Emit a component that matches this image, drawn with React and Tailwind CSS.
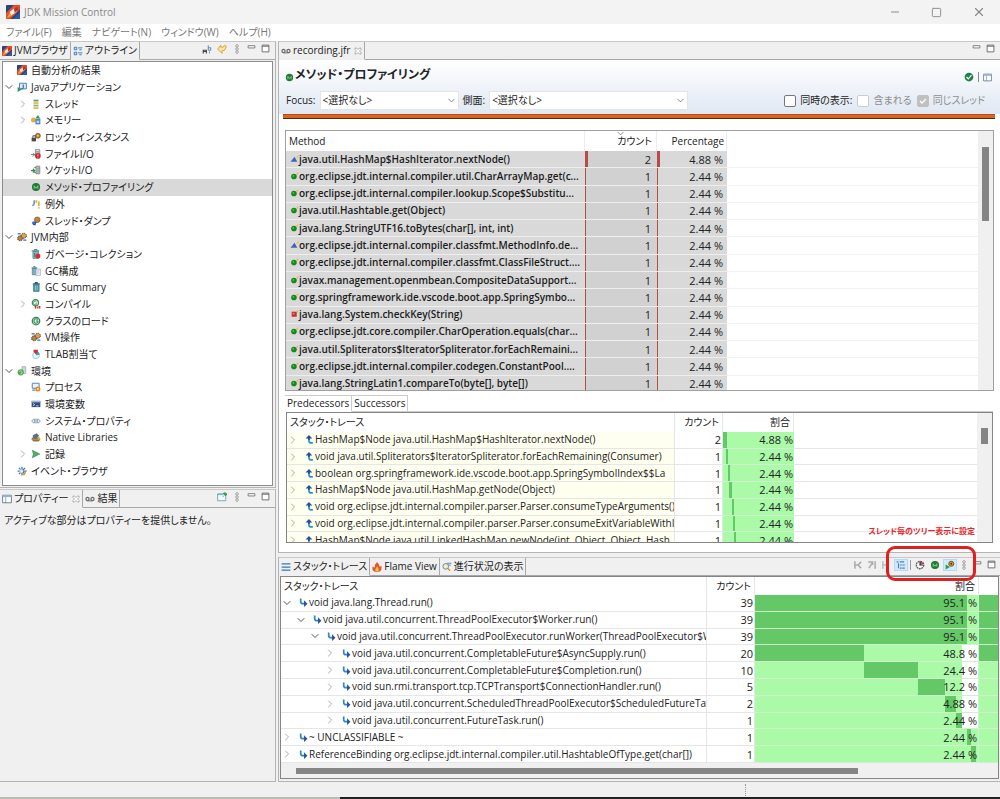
import clsx from "clsx";
import { ChevronDown, ChevronRight, Minus, Square, X } from "lucide-react";

const ICONS = {
  logo: (
    <>
      <rect width="16" height="16" rx="1" fill="#24477e" />
      <path d="M0 9 9 0h7v5L5 16H0Z" fill="#e2502c" />
      <path d="M4 8 10 3l3 1-1 4-6 4Z" fill="#f4ece6" />
      <path d="m9 4 4-2 1 3-4 4Z" fill="#c43120" />
      <path d="m1 15 3-6 3 3Z" fill="#f6a13a" />
      <path d="M8 16 16 8v8Z" fill="#2d5ba0" />
    </>
  ),
  outline: (
    <g fill="none" stroke="#3a78b8" strokeWidth="1.5">
      <path d="M2 2h4v4H2zM2 10h4v4H2z" fill="#cfe4f7" />
      <path d="M8 3h7M10 6h4M8 11h7M10 14h4" />
    </g>
  ),
  javaapp: (
    <>
      <path d="M4 2h11v9H4z" fill="#dcecfb" stroke="#4a7cb5" strokeWidth="1.5" />
      <path d="M10 4v5q0 2-3 2" fill="none" stroke="#3565a4" strokeWidth="1.8" />
      <path d="m1 8 7 4-7 4Z" fill="#2f9a62" />
    </>
  ),
  threads: (
    <>
      <path d="M4 1h8v3H4z" fill="#6d9c74" />
      <path d="M4 5h8v3H4z" fill="#e8c04b" />
      <path d="M4 9h8v3H4z" fill="#8cb29a" />
      <path d="M4 13h8v3H4z" fill="#e6bf58" />
    </>
  ),
  memory: (
    <>
      <path d="m7 5 4-5 4 6Z" fill="#3d9a52" />
      <circle cx="4" cy="8" r="4" fill="#e9ae33" />
      <path d="M7 6h8v9H7z" fill="#4b86cf" />
      <path d="M9 9h4v4H9z" fill="#b9d8f6" />
    </>
  ),
  lock: (
    <>
      <path d="M1 9h7v6H1z" fill="#4b4a46" />
      <path d="M3 9V6h4v3" fill="none" stroke="#4b4a46" strokeWidth="1.5" />
      <circle cx="11" cy="6" r="4" fill="#b77b31" stroke="#6a471b" />
      <circle cx="11" cy="6" r="1.5" fill="#f5d58d" />
    </>
  ),
  fileio: (
    <>
      <path d="M7 1h7v9H7z" fill="#eee" stroke="#777" strokeWidth="1.3" />
      <path d="M8 4h5M8 6h5" stroke="#777" />
      <path d="M0 9h5M3 7l3 2-3 3" fill="none" stroke="#3a9150" strokeWidth="1.6" />
      <circle cx="11" cy="11" r="4.5" fill="#cf2433" />
      <path d="M11 8.5v3M11 12.5v1" stroke="#fff" strokeWidth="1.3" />
    </>
  ),
  socketio: (
    <>
      <path d="M8 2h6v12H8z" fill="#ddd" stroke="#6f7a72" strokeWidth="1.4" />
      <path d="M5 4h3M5 12h3M9 5h4M9 8h4M9 11h4" stroke="#6f7a72" strokeWidth="1.4" />
      <path d="M0 9h5M3 6l3 3-3 3" fill="none" stroke="#2f8c50" strokeWidth="1.8" />
    </>
  ),
  method: (
    <>
      <circle cx="8" cy="8" r="6.5" fill="#1f7a33" />
      <path d="M5 11V6l3 4 3-4v5" fill="none" stroke="#a5e0a0" strokeWidth="1.2" />
    </>
  ),
  exception: (
    <>
      <path d="M5 2v6q0 2-3 2" fill="none" stroke="#4c7db5" strokeWidth="2" />
      <path d="M7 2h3v4H7zM11 4h3v7h-3zM11 13h3v2h-3z" fill="#e3b23b" />
    </>
  ),
  dump: (
    <>
      <circle cx="10" cy="6" r="4.5" fill="#c4852f" stroke="#77501c" />
      <path d="M2 9h7l-2 6-4-1Z" fill="#2b48b8" />
      <path d="m1 12 4-4 3 5Z" fill="#3c66dd" />
    </>
  ),
  gears: (
    <>
      <circle cx="5" cy="10" r="4" fill="#b98243" stroke="#54371a" strokeDasharray="2 1" strokeWidth="1.6" />
      <circle cx="11" cy="6" r="4" fill="#d6a45a" stroke="#5c3c18" strokeDasharray="2 1" strokeWidth="1.6" />
      <path d="M10 13h5M1 3h5" stroke="#3a6aa0" strokeWidth="2" />
    </>
  ),
  gc: (
    <>
      <path d="M3 4h9v11H3z" fill="#8bb9bd" stroke="#3c7880" />
      <path d="M1 3h12M5 1h5M6 6v7" stroke="#36747c" strokeWidth="1.6" />
      <circle cx="11" cy="11" r="4" fill="#d32c3a" />
    </>
  ),
  gcconf: (
    <>
      <path d="M2 4h7v10H2z" fill="#7fb0bd" stroke="#3e7686" />
      <path d="M1 3h9M4 1h3" stroke="#3e7686" strokeWidth="1.6" />
      <path d="M8 5h7v10H8z" fill="#f1f5fa" stroke="#8a9db4" />
      <path d="M10 8h3M10 11h3" stroke="#8a9db4" />
    </>
  ),
  trash: (
    <>
      <path d="M4 4h9v11H4z" fill="#4e9da6" stroke="#2d6a74" />
      <path d="M3 3h11M6 1h5" stroke="#2d6a74" strokeWidth="1.8" />
      <path d="M7 6v7M10 6v7" stroke="#a9d7dc" />
    </>
  ),
  compile: (
    <>
      <circle cx="7" cy="6" r="5" fill="#e6f4e8" stroke="#318550" strokeWidth="1.8" />
      <path d="M9 5a3 3 0 1 0 0 3H7" fill="none" stroke="#318550" strokeWidth="1.3" />
      <path d="M6 11h2v4H6zM9 12h2v3H9zM12 11h3v4h-3z" fill="#c0392b" />
    </>
  ),
  classload: (
    <>
      <circle cx="8" cy="8" r="6" fill="#e6f4e8" stroke="#318550" strokeWidth="2" />
      <path d="M11 6a3.5 3.5 0 1 0 0 4V8H8" fill="none" stroke="#318550" strokeWidth="1.7" />
    </>
  ),
  tlab: (
    <>
      <circle cx="8" cy="10" r="5.5" fill="#e2f2fa" stroke="#7fb5cc" />
      <path d="M8 10V4a6 6 0 0 1 6 5Z" fill="#3aa0a8" />
      <path d="M4 1h7v4l-4 3-3-4Z" fill="#cf2d32" />
    </>
  ),
  env: (
    <>
      <path d="M8 1h6v11H8z" fill="#cfd6dc" stroke="#8d99a5" />
      <circle cx="6" cy="10" r="5" fill="#4ca653" />
      <path d="M3 9q3-3 5 0t-3 4" fill="none" stroke="#c9edc4" strokeWidth="1.3" />
    </>
  ),
  process: (
    <>
      <path d="M2 2h11v8H2z" fill="#eaf2fb" stroke="#5b86b8" strokeWidth="1.6" />
      <path d="M2 13h5" stroke="#5b86b8" strokeWidth="2" />
      <circle cx="11" cy="11" r="4" fill="#e68a1e" />
      <circle cx="11" cy="11" r="1.4" fill="#fff1cf" />
    </>
  ),
  envvars: (
    <>
      <path d="M1 3h14v10H1z" fill="#2e4d7d" />
      <path d="M1 3h14v2.5H1z" fill="#9db6d6" />
      <path d="m3 7 3 2-3 2M8 11h4" fill="none" stroke="#dbe8fa" strokeWidth="1.3" />
    </>
  ),
  sysprops: (
    <path
      d="M6 5H4L1 8l3 3h2ZM10 5h2l3 3-3 3h-2ZM8 4v8"
      fill="#e4ecf6"
      stroke="#7288a8"
      strokeWidth="1.3"
    />
  ),
  jar: (
    <>
      <ellipse cx="8" cy="11" rx="7" ry="4" fill="#c6a255" />
      <path d="M1 11h13M3 14h10" stroke="#6a5a35" strokeWidth="1.4" />
      <path d="m3 5 6-3 4 4-4 4-6-1Z" fill="#5a6f88" />
      <path d="m11 7 4 3-4 3Z" fill="#e0b33e" />
    </>
  ),
  play: <path d="m2 2 12 6-12 6 2-6Z" fill="#4fb06b" stroke="#2d8a4e" />,
  event: (
    <>
      <path d="M8 1v14M1 8h14M3 3l10 10M13 3 3 13" stroke="#3f72b5" strokeWidth="2" />
      <circle cx="7" cy="8" r="3" fill="#dceafc" />
      <path d="m8 11 3 3 4-7" fill="none" stroke="#cc9c2f" strokeWidth="1.8" />
    </>
  ),
  properties: (
    <>
      <path d="M1 2h14v12H1z" fill="#fff" stroke="#5f7192" strokeWidth="1.4" />
      <path d="M1 2h14v3H1z" fill="#9db1d4" />
      <path d="M6 5v9" stroke="#5f7192" />
    </>
  ),
  tape: (
    <>
      <circle cx="4" cy="8" r="2.5" fill="none" stroke="#6b6b6b" strokeWidth="2" />
      <circle cx="12" cy="8" r="2.5" fill="none" stroke="#6b6b6b" strokeWidth="2" />
      <path d="M4 11h8" stroke="#6b6b6b" strokeWidth="1.5" />
    </>
  ),
  sort: (
    <>
      <path d="M2 15v-5h5v5M2 12h5" fill="none" stroke="#444" strokeWidth="1.8" />
      <path d="M10 2v8h4V6h-4M12 12v3" fill="none" stroke="#5582bd" strokeWidth="1.5" />
    </>
  ),
  link: (
    <path
      d="M1 8l5-6v3h4l2-3 3 2-3 6-4 1v4Z"
      fill="#fbe3a0"
      stroke="#d49d28"
      strokeWidth="1.4"
    />
  ),
  pin: (
    <>
      <path d="M1 3h13v11H1z" fill="#f1f9f8" stroke="#5e9aa3" strokeWidth="1.3" />
      <path d="M1 3h9v2H1z" fill="#7ab7c5" />
      <path d="m9 8 3-3M10 2l4 4 2-3-3-2Z" fill="#36a558" stroke="#278546" />
    </>
  ),
  dots: (
    <g fill="#fff" stroke="#8a8a8a" strokeWidth="1.3">
      <circle cx="8" cy="3" r="2" />
      <circle cx="8" cy="8" r="2" />
      <circle cx="8" cy="13" r="2" />
    </g>
  ),
  min: <path d="M2 3h12v4H2z" fill="#fff" stroke="#777" strokeWidth="1.6" />,
  max: (
    <>
      <path d="M2 2h12v12H2z" fill="#fff" stroke="#666" strokeWidth="1.6" />
      <path d="M2 4h12" stroke="#666" strokeWidth="1.6" />
    </>
  ),
  close: (
    <path
      d="M2 2h3l3 3 3-3h3v3l-3 3 3 3v3h-3l-3-3-3 3H2v-3l3-3-3-3Z"
      fill="#fff"
      stroke="#888"
      strokeWidth="1.3"
    />
  ),
  ok: (
    <>
      <circle cx="8" cy="8" r="7" fill="#1d8343" />
      <path d="m4 8 3 3 5-6" fill="none" stroke="#fff" strokeWidth="2" />
    </>
  ),
  green: (
    <>
      <circle cx="7" cy="8" r="5" fill="#14871c" />
      <circle cx="6" cy="7" r="1.6" fill="#5fbf55" />
      <path d="m10 4 5-4-1 5Z" fill="#d8c04c" />
    </>
  ),
  blue: (
    <>
      <path d="m8 3 5 9H1Z" fill="#3f63b5" />
      <path d="m11 4 4-4v5Z" fill="#d8c04c" />
    </>
  ),
  red: (
    <>
      <path d="M3 3h9v9H3z" fill="#c0322d" />
      <path d="M5 5h3v3H5z" fill="#e98a80" />
      <path d="m11 3 4-3-1 5Z" fill="#d8c04c" />
    </>
  ),
  up: (
    <>
      <path d="M7 4v6q0 4 4 4h3" fill="none" stroke="#2496d0" strokeWidth="3" />
      <path d="M7 3v6" stroke="#24509c" strokeWidth="3" />
      <path d="m1 6 6-6 6 6Z" fill="#24509c" />
    </>
  ),
  down: (
    <>
      <path d="M3 1v5q0 4 4 4h4" fill="none" stroke="#2a8ac4" strokeWidth="3" />
      <path d="m9 4 6 6-6 6Z" fill="#2a4fa0" />
    </>
  ),
  lines: <path d="M1 3h14M1 8h14M1 13h14" stroke="#3277b8" strokeWidth="2" />,
  flame: (
    <>
      <path d="M8 0q5 5 4 8l3-2q2 10-7 10T1 7l3 2Q4 4 8 0Z" fill="#dd5a26" />
      <path d="M8 7q4 4 2 8H6Q4 12 8 7Z" fill="#f9c04b" />
    </>
  ),
  progress: (
    <>
      <path d="M8 2h7M9 5h5" stroke="#5a8ab8" strokeWidth="1.6" />
      <circle cx="6" cy="7" r="4.5" fill="#f9ecc0" stroke="#4b7fae" strokeWidth="1.4" />
      <path d="m9 10 4 4" stroke="#d28e2a" strokeWidth="2" />
    </>
  ),
  treeview: (
    <g stroke="#4f81bd" strokeWidth="1.8" fill="none">
      <path d="M1 3h3M6 3h7M4 5v8M6 8h3M10 8h4M6 13h3M10 13h4" />
    </g>
  ),
  clock: (
    <>
      <circle cx="8" cy="8" r="6" fill="#f4f4f4" stroke="#555" strokeWidth="2" strokeDasharray="3 1" />
      <path d="M8 8V2a6 6 0 0 1 5 4Z" fill="#cf4034" />
      <path d="M8 3v5h5" fill="none" stroke="#26334f" strokeWidth="1.8" />
    </>
  ),
  gearplay: (
    <>
      <circle cx="10" cy="6" r="4" fill="#d29a3d" stroke="#7b5620" strokeWidth="1.6" />
      <circle cx="10" cy="6" r="1.5" fill="#4d3a1a" />
      <path d="m1 7 7 4-7 4Z" fill="#2f9b4d" />
    </>
  ),
  nav1: <path d="M3 2v12M3 8h6M13 3 8 8l5 5" fill="none" stroke="#aaa" strokeWidth="2.4" />,
  nav2: <path d="M13 2v12M2 3h7v5M9 4l-6 9" fill="none" stroke="#aaa" strokeWidth="2.4" />,
  nav3: <path d="M3 2v12M4 8h7M11 5v6" fill="none" stroke="#bbb" strokeWidth="2.4" />,
};

function Icon({ name, className = "size-[10px]" }) {
  return (
    <svg viewBox="0 0 16 16" className={clsx("shrink-0", className)} aria-hidden="true">
      {ICONS[name]}
    </svg>
  );
}

function Twisty({ open }) {
  const Arrow = open ? ChevronDown : ChevronRight;
  return (
    <button aria-label={open ? "Collapse" : "Expand"} className="-m-[2px] flex">
      <Arrow size={12} strokeWidth={2} className={open ? "text-[#555]" : "text-[#aaa]"} />
    </button>
  );
}

const TREE = [
  [0, "", "logo", "自動分析の結果"],
  [0, "open", "javaapp", "Javaアプリケーション"],
  [1, "closed", "threads", "スレッド"],
  [1, "closed", "memory", "メモリー"],
  [1, "", "lock", "ロック・インスタンス"],
  [1, "", "fileio", "ファイルI/O"],
  [1, "", "socketio", "ソケットI/O"],
  [1, "", "method", "メソッド・プロファイリング"],
  [1, "", "exception", "例外"],
  [1, "", "dump", "スレッド・ダンプ"],
  [0, "open", "gears", "JVM内部"],
  [1, "", "gc", "ガベージ・コレクション"],
  [1, "", "gcconf", "GC構成"],
  [1, "", "trash", "GC Summary"],
  [1, "closed", "compile", "コンパイル"],
  [1, "", "classload", "クラスのロード"],
  [1, "", "gears", "VM操作"],
  [1, "", "tlab", "TLAB割当て"],
  [0, "open", "env", "環境"],
  [1, "", "process", "プロセス"],
  [1, "", "envvars", "環境変数"],
  [1, "", "sysprops", "システム・プロパティ"],
  [1, "", "jar", "Native Libraries"],
  [1, "closed", "play", "記録"],
  [0, "", "event", "イベント・ブラウザ"],
];

const METHODS = [
  ["blue", "java.util.HashMap$HashIterator.nextNode()", 2, "4.88 %"],
  ["green", "org.eclipse.jdt.internal.compiler.util.CharArrayMap.get(c...", 1, "2.44 %"],
  ["green", "org.eclipse.jdt.internal.compiler.lookup.Scope$Substitu...", 1, "2.44 %"],
  ["green", "java.util.Hashtable.get(Object)", 1, "2.44 %"],
  ["green", "java.lang.StringUTF16.toBytes(char[], int, int)", 1, "2.44 %"],
  ["blue", "org.eclipse.jdt.internal.compiler.classfmt.MethodInfo.de...", 1, "2.44 %"],
  ["green", "org.eclipse.jdt.internal.compiler.classfmt.ClassFileStruct....", 1, "2.44 %"],
  ["green", "javax.management.openmbean.CompositeDataSupport...", 1, "2.44 %"],
  ["green", "org.springframework.ide.vscode.boot.app.SpringSymbo...", 1, "2.44 %"],
  ["red", "java.lang.System.checkKey(String)", 1, "2.44 %"],
  ["green", "org.eclipse.jdt.core.compiler.CharOperation.equals(char...", 1, "2.44 %"],
  ["green", "java.util.Spliterators$IteratorSpliterator.forEachRemaini...", 1, "2.44 %"],
  ["green", "org.eclipse.jdt.internal.compiler.codegen.ConstantPool....", 1, "2.44 %"],
  ["green", "java.lang.StringLatin1.compareTo(byte[], byte[])", 1, "2.44 %"],
];

// [name, count, percentage, bar start %, bar end %]
const PREDECESSORS = [
  ["HashMap$Node java.util.HashMap$HashIterator.nextNode()", 2, "4.88 %", 0, 5],
  ["void java.util.Spliterators$IteratorSpliterator.forEachRemaining(Consumer)", 1, "2.44 %", 4, 7],
  ["boolean org.springframework.ide.vscode.boot.app.SpringSymbolIndex$$La", 1, "2.44 %", 7, 10],
  ["HashMap$Node java.util.HashMap.getNode(Object)", 1, "2.44 %", 9, 12],
  ["void org.eclipse.jdt.internal.compiler.parser.Parser.consumeTypeArguments()", 1, "2.44 %", 12, 15],
  ["void org.eclipse.jdt.internal.compiler.parser.Parser.consumeExitVariableWithIn", 1, "2.44 %", 14, 17],
  ["HashMap$Node java.util.LinkedHashMap.newNode(int, Object, Object, Hash", 1, "2.44 %", 16, 19],
];

// [depth, open, name, count, percentage, bar start %, bar end %, light end %]
const TRACES = [
  [0, true, "void java.lang.Thread.run()", 39, "95.1 %", 0, 95, 100],
  [1, true, "void java.util.concurrent.ThreadPoolExecutor$Worker.run()", 39, "95.1 %", 0, 95, 100],
  [2, true, "void java.util.concurrent.ThreadPoolExecutor.runWorker(ThreadPoolExecutor$W", 39, "95.1 %", 0, 95, 100],
  [3, false, "void java.util.concurrent.CompletableFuture$AsyncSupply.run()", 20, "48.8 %", 0, 49, 93],
  [3, false, "void java.util.concurrent.CompletableFuture$Completion.run()", 10, "24.4 %", 49, 73, 93],
  [3, false, "void sun.rmi.transport.tcp.TCPTransport$ConnectionHandler.run()", 5, "12.2 %", 73, 85, 93],
  [3, false, "void java.util.concurrent.ScheduledThreadPoolExecutor$ScheduledFutureTas", 2, "4.88 %", 85, 90, 93],
  [3, false, "void java.util.concurrent.FutureTask.run()", 1, "2.44 %", 90, 93, 93],
  [0, false, "~ UNCLASSIFIABLE ~", 1, "2.44 %", 95, 97, 100],
  [0, false, "ReferenceBinding org.eclipse.jdt.internal.compiler.util.HashtableOfType.get(char[])", 1, "2.44 %", 97, 99, 100],
];

const LIGHT = "#aafaa8";
const DARK = "#65c866";

const bar = (start, end, edge = 100) =>
  `linear-gradient(to right, ${LIGHT} ${start}%, ${DARK} ${start}%, ${DARK} ${end}%, ${LIGHT} ${end}%, ${LIGHT} ${edge}%, #fff ${edge}%)`;

// red bar at the left of a selected cell
const redBar = (count, bg) => {
  const width = count > 1 ? 3 : 1;
  return `linear-gradient(to right, #b84a4a ${width}px, ${bg} ${width}px)`;
};

function Tab({ icon, label, closable, active }) {
  return (
    <button
      role="tab"
      aria-selected={!!active}
      className={clsx(
        "flex items-center gap-[2px] border-r border-b border-r-[#a8a8a8] px-[2px] whitespace-nowrap",
        active ? "border-b-transparent" : "border-b-[#a8a8a8]"
      )}
    >
      <Icon name={icon} />
      <span>{label}</span>
      {closable && <Icon name="close" className="ml-[2px] size-2" />}
    </button>
  );
}

function TabBar({ children, tools }) {
  return (
    <div className="flex h-[19px] shrink-0 border-t border-[#c8c8c8]">
      <div role="tablist" className="flex">
        {children}
      </div>
      <div className="flex flex-1 items-start justify-end gap-[3px] border-b border-[#a8a8a8] pt-[1px] pr-1">
        {tools.map((t) => (
          <button key={t} aria-label={t} className="p-[1px]">
            <Icon name={t} className={t === "min" || t === "max" ? "size-[9px]" : "size-[10px]"} />
          </button>
        ))}
      </div>
    </div>
  );
}

function Sidebar() {
  return (
    <aside className="flex w-[276px] shrink-0 flex-col">
      <section className="border-r border-b border-[#b4b4b4] pb-[1px]">
        <TabBar tools={["sort", "link", "dots", "min", "max"]}>
          <Tab icon="logo" label="JVMブラウザ" />
          <Tab icon="outline" label="アウトライン" active />
        </TabBar>
        <div className="mx-[2px] mt-[1px] h-[425px] border border-[#8c8c8c] bg-white">
          <ul className="flex h-[417px] flex-col">
            {TREE.map(([depth, state, icon, label]) => (
              <li
                key={label}
                className={clsx(
                  "flex flex-1 items-center gap-1",
                  depth ? "pl-4" : "pl-[2px]",
                  icon === "method" && "bg-[#d9d9d9]"
                )}
              >
                <span className="flex w-2">{state && <Twisty open={state === "open"} />}</span>
                <Icon name={icon} />
                <span className="leading-4">{label}</span>
              </li>
            ))}
          </ul>
        </div>
      </section>
      <section className="mt-[1px] flex flex-1 flex-col border-r border-b border-[#b4b4b4]">
        <TabBar tools={["pin", "dots", "min", "max"]}>
          <Tab icon="properties" label="プロパティー" closable active />
          <Tab icon="tape" label="結果" />
        </TabBar>
        <p className="px-1 py-1 leading-4">アクティブな部分はプロパティーを提供しません。</p>
      </section>
    </aside>
  );
}

function Combo({ label, wide }) {
  return (
    <label className="flex items-center gap-1">
      {label}
      <span className={clsx("relative flex", wide ? "w-[199px]" : "w-[139px]")}>
        <select className="h-[19px] w-full appearance-none border border-[#e4e4e4] bg-white px-[2px]">
          <option>&lt;選択なし&gt;</option>
        </select>
        <ChevronDown size={11} className="pointer-events-none absolute top-1 right-[2px] text-[#777]" />
      </span>
    </label>
  );
}

function Check({ label, disabled, checked }) {
  return (
    <label className={clsx("flex items-center gap-1", disabled && "text-[#8d8d8d]")}>
      <span className="relative flex">
        <input
          type="checkbox"
          disabled={disabled}
          defaultChecked={checked}
          className={clsx(
            "size-3 appearance-none rounded-[2px] border",
            checked ? "border-[#c0c0c0] bg-[#c0c0c0]" : "bg-white",
            !checked && (disabled ? "border-[#ccc]" : "border-[#777]")
          )}
        />
        {checked && (
          <svg viewBox="0 0 12 12" className="pointer-events-none absolute inset-0 size-3">
            <path d="m3 6 2 2 4-4" fill="none" stroke="#fff" strokeWidth="1.3" />
          </svg>
        )}
      </span>
      {label}
    </label>
  );
}

function MethodTable() {
  return (
    <div className="mx-[6px] mt-[11px] flex h-[261px] overflow-hidden border border-[#a0a0a0]">
      <div className="min-w-0 flex-1">
        <table className="h-[262px] w-full table-fixed border-separate border-spacing-0 leading-[15px]">
          <colgroup>
            <col className="w-[299px]" />
            <col className="w-[72px]" />
            <col className="w-[70px]" />
            <col />
          </colgroup>
          <thead>
            <tr className="h-[20px]">
              <th className="border-r border-[#ececec] pl-[3px] text-left font-normal">Method</th>
              <th className="relative border-r border-[#ececec] pr-1 text-right font-normal">
                カウント
                <ChevronDown size={11} className="absolute -top-[3px] left-[30px] text-[#888]" />
              </th>
              <th className="border-r border-[#ececec] pr-[2px] text-right font-normal">Percentage</th>
              <th />
            </tr>
          </thead>
          <tbody>
            {METHODS.map(([icon, name, count, pct]) => (
              <tr key={name}>
                <td className="border-b border-[#eee] bg-[#d9d9d9] p-0 pl-1">
                  <div className="flex items-center overflow-hidden font-semibold whitespace-nowrap text-[#1c1c1c]">
                    <Icon name={icon} className="size-[9px]" />
                    {name}
                  </div>
                </td>
                <td
                  className="border-b border-[#eee] p-0 pr-[6px] text-right text-[11px]"
                  style={{ background: redBar(count, "#d1d1d1") }}
                >
                  {count}
                </td>
                <td
                  className="border-b border-[#eee] p-0 pr-1 text-right text-[11px]"
                  style={{ background: redBar(count, "#d9d9d9") }}
                >
                  {pct}
                </td>
                <td className="border-b border-[#f2f2f2]" />
              </tr>
            ))}
          </tbody>
        </table>
      </div>
      <div className="w-[15px] bg-[#f0f0f0] px-1 pt-4">
        <div className="h-[74px] bg-[#858585]" />
      </div>
    </div>
  );
}

function PredecessorTable() {
  return (
    <div className="mx-[7px] flex h-[131px] overflow-hidden border border-[#858585]">
      <div className="min-w-0 flex-1">
        <table className="h-[136px] w-full table-fixed border-separate border-spacing-0 leading-[15px]">
          <colgroup>
            <col className="w-[388px]" />
            <col className="w-[48px]" />
            <col className="w-[71px]" />
            <col />
          </colgroup>
          <thead>
            <tr className="h-[19px]">
              <th className="border-r border-[#e6e6e6] pl-[3px] text-left font-normal">スタック・トレース</th>
              <th className="border-r border-[#e6e6e6] pr-[3px] text-right font-normal">カウント</th>
              <th className="border-r border-[#e6e6e6] pr-[3px] text-right font-normal">割合</th>
              <th />
            </tr>
          </thead>
          <tbody>
            {PREDECESSORS.map(([name, count, pct, start, end]) => (
              <tr key={name}>
                <td className="border-r border-b border-[#e6e6e6] bg-[#fffff0] p-0 pl-[2px]">
                  <div className="flex items-center overflow-hidden whitespace-nowrap">
                    <Twisty />
                    <Icon name="up" className="mr-[1px] ml-2 size-[9px]" />
                    {name}
                  </div>
                </td>
                <td className="border-r border-b border-[#e6e6e6] p-0 pr-[1px] text-right text-[11px]">{count}</td>
                <td
                  className="border-b border-[#d0efd0] p-0 pr-[1px] text-right text-[11px]"
                  style={{ background: bar(start, end) }}
                >
                  {pct}
                </td>
                <td className="border-b border-[#e6e6e6]" />
              </tr>
            ))}
          </tbody>
        </table>
      </div>
      <div className="w-[15px] bg-[#f0f0f0] px-1 pt-[15px]">
        <div className="h-4 bg-[#858585]" />
      </div>
    </div>
  );
}

function Editor() {
  return (
    <section className="flex flex-1 flex-col border-b border-l border-[#b4b4b4]">
      <TabBar tools={["min", "max"]}>
        <Tab icon="tape" label="recording.jfr" closable active />
      </TabBar>
      <div className="flex-1 bg-white pb-2">
        <header className="bg-linear-to-b from-white to-[#e0e8f3]">
          <div className="flex h-[30px] items-center justify-between pr-2 pl-[6px]">
            <h1 className="flex items-center text-[12px] font-bold">
              <Icon name="method" className="mt-1 mr-[1px] size-[9px]" />
              メソッド・プロファイリング
            </h1>
            <div className="flex items-center gap-1 pt-1">
              <Icon name="ok" />
              <span className="h-[10px] w-px bg-[#888]" />
              <Icon name="properties" className="size-[9px]" />
            </div>
          </div>
          <div className="flex h-6 items-start justify-between pt-[1px] pr-[15px] pl-[7px]">
            <div className="flex gap-1">
              <Combo label="Focus:" />
              <Combo label="側面:" wide />
            </div>
            <div className="flex h-[19px] items-center gap-[5px]">
              <Check label="同時の表示:" />
              <Check label="含まれる" disabled />
              <Check label="同じスレッド" disabled checked />
            </div>
          </div>
        </header>
        <div className="mr-[5px] ml-1 h-[5px] border-t border-b border-t-[#a5502b] border-b-[#4a2c1c] bg-[#e0641c]" />
        <MethodTable />
        <div role="tablist" className="mt-1 mr-[7px] ml-[6px] flex h-[17px]">
          <button role="tab" aria-selected="true" className="border-t border-r border-b border-[#ccc] border-b-transparent px-[2px]">
            Predecessors
          </button>
          <button role="tab" aria-selected="false" className="border-t border-r border-b border-[#ccc] px-[2px]">
            Successors
          </button>
          <div className="flex-1 border-b border-[#ccc]" />
        </div>
        <PredecessorTable />
      </div>
    </section>
  );
}

const INDENT = ["pl-[2px]", "pl-[16px]", "pl-[30px]", "pl-[45px]"];

function StackTraceView() {
  return (
    <section className="relative mt-1 border-b border-l border-[#b4b4b4] pb-[2px]">
      <div className="flex h-[19px] border-t border-[#c8c8c8]">
        <div role="tablist" className="flex">
          <Tab icon="lines" label="スタック・トレース" active />
          <Tab icon="flame" label="Flame View" />
          <Tab icon="progress" label="進行状況の表示" />
        </div>
        <div className="flex flex-1 items-start justify-end gap-[2px] border-b border-[#a8a8a8] pt-[1px] pr-[3px]">
          <button aria-label="Previous frame" className="p-[1px]"><Icon name="nav1" /></button>
          <button aria-label="Next frame" className="p-[1px]"><Icon name="nav2" /></button>
          <button aria-label="Group" className="p-[1px]"><Icon name="nav3" /></button>
          <button aria-label="Tree" className="border border-[#b4d8f5] bg-[#d3e9fb] px-[1px]"><Icon name="treeview" /></button>
          <span className="mt-[1px] h-[10px] w-px bg-[#999]" />
          <button aria-label="Time" className="px-[2px] py-[1px]"><Icon name="clock" /></button>
          <button aria-label="Method" className="p-[1px]"><Icon name="method" /></button>
          <button aria-label="Thread root" className="border border-[#b4d8f5] bg-[#d3e9fb] px-[1px]"><Icon name="gearplay" /></button>
          <button aria-label="Menu" className="py-[1px]"><Icon name="dots" /></button>
          <button aria-label="Minimize" className="px-[2px] py-[1px]"><Icon name="min" className="size-[9px]" /></button>
          <button aria-label="Maximize" className="p-[1px]"><Icon name="max" className="size-[9px]" /></button>
        </div>
      </div>
      <div className="mx-[1px] border border-[#858585] bg-white">
        <table className="h-[186px] w-full table-fixed border-separate border-spacing-0 leading-[15px]">
          <colgroup>
            <col />
            <col className="w-[48px]" />
            <col className="w-[224px]" />
            <col className="w-[19px]" />
          </colgroup>
          <thead>
            <tr className="h-[18px]">
              <th className="border-r border-[#e6e6e6] pl-[3px] text-left font-normal">スタック・トレース</th>
              <th className="border-r border-[#e6e6e6] pr-[3px] text-right font-normal">カウント</th>
              <th className="border-r border-[#e6e6e6] pr-[3px] text-right font-normal">割合</th>
              <th />
            </tr>
          </thead>
          <tbody>
            {TRACES.map(([depth, open, name, count, pct, start, end, edge]) => (
              <tr key={name}>
                <td className={clsx("border-r border-b border-[#e6e6e6] p-0", INDENT[depth])}>
                  <div className="flex items-center overflow-hidden whitespace-nowrap">
                    <Twisty open={open} />
                    <Icon name="down" className="mr-[1px] ml-2 size-[9px]" />
                    {name}
                  </div>
                </td>
                <td className="border-r border-b border-[#e6e6e6] p-0 pr-[1px] text-right text-[11px]">{count}</td>
                <td
                  className="border-r border-b border-[#d0efd0] p-0 pr-[1px] text-right text-[11px]"
                  style={{ background: bar(start, end, edge) }}
                >
                  {pct}
                </td>
                <td
                  className="border-b border-[#d0efd0] p-0"
                  style={{ background: count >= 20 ? DARK : LIGHT }}
                />
              </tr>
            ))}
          </tbody>
        </table>
        <div className="h-[15px] bg-[#f0f0f0] pt-[5px] pr-[140px] pl-[15px]">
          <div className="h-[6px] bg-[#858585]" />
        </div>
      </div>
      <p className="absolute -top-[32px] right-[25px] text-[8px] font-bold text-[#e0282e]">
        スレッド毎のツリー表示に設定
      </p>
      <div className="absolute -top-[11px] right-[24px] h-[35px] w-[90px] rounded-[9px] border-3 border-[#e0201f]" />
    </section>
  );
}

export default function App() {
  return (
    <div
      lang="ja"
      className="flex min-h-screen flex-col bg-[#f0f0f0] font-['Open_Sans','Noto_Sans_CJK_JP',sans-serif] text-[10px] text-[#222] [font-feature-settings:'palt']"
    >
      <div className="flex h-6 items-center justify-between bg-[#f3f3f3] pr-[14px] pl-[6px] text-[#888]">
        <div className="flex items-center gap-1">
          <Icon name="logo" className="size-[14px]" />
          <span>JDK Mission Control</span>
        </div>
        <div className="flex items-center gap-[30px]">
          <button aria-label="Minimize"><Minus size={12} strokeWidth={2} /></button>
          <button aria-label="Maximize"><Square size={11} strokeWidth={2} /></button>
          <button aria-label="Close"><X size={14} strokeWidth={2} /></button>
        </div>
      </div>
      <nav className="flex h-[17px] items-center gap-[10px] bg-white px-[6px] text-[#777]">
        <button>ファイル(F)</button>
        <button>編集</button>
        <button>ナビゲート(N)</button>
        <button>ウィンドウ(W)</button>
        <button>ヘルプ(H)</button>
      </nav>
      <main className="flex flex-1 gap-[2px]">
        <Sidebar />
        <div className="flex min-w-0 flex-1 flex-col">
          <Editor />
          <StackTraceView />
        </div>
      </main>
      <footer className="flex h-[15px] shrink-0 items-center justify-end pr-[254px]">
        <div className="h-3 border-l border-dotted border-[#999]" />
      </footer>
      <div className="flex h-[2px] shrink-0">
        <div className="w-[340px] bg-[#b9bcb4]" />
        <div className="flex-1 bg-[#222]" />
      </div>
    </div>
  );
}
